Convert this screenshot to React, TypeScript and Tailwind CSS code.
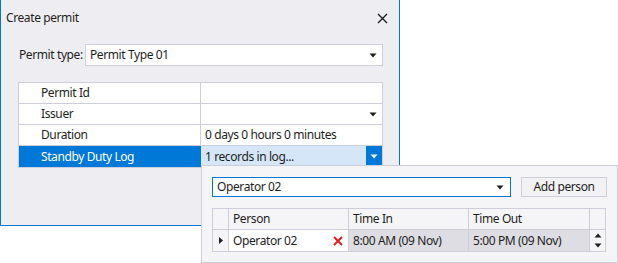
import React from "react";

const Down = ({ color = "#1e1e1e" }: { color?: string }) => (
  <svg width="8" height="5" viewBox="0 0 8 5" className="block">
    <path d="M0.5 0.5 H7.5 L4 4.5 Z" fill={color} />
  </svg>
);

const Up = () => (
  <svg width="8" height="5" viewBox="0 0 8 5" className="block">
    <path d="M0.5 4.5 H7.5 L4 0.5 Z" fill="#1e1e1e" />
  </svg>
);

export default function App() {
  return (
    <div
      className="relative w-[618px] h-[263px] bg-white overflow-hidden text-[12px] leading-[16px] tracking-[-0.4px] text-[#1e1e1e] whitespace-nowrap"
      style={{ fontFamily: '"Noto Sans", "Open Sans", sans-serif' }}
    >
      {/* Window */}
      <div className="w-[400px] h-[226px] bg-[#eeeef2] border-l border-r border-b border-[#0078d7] flex flex-col">
        <div className="h-[36px] flex items-center justify-between pl-[5px] pr-[11px]">
          <span>Create permit</span>
          <svg width="11" height="11" viewBox="0 0 11 11">
            <path d="M1 1 L10 10 M10 1 L1 10" stroke="#1e1e1e" strokeWidth="1.4" />
          </svg>
        </div>
        <div className="mt-[8px] pl-[18px] pr-[16px] flex items-center">
          <span className="w-[66px]">Permit type:</span>
          <div className="flex-1 h-[22px] bg-white border border-[#cccedb] flex items-center justify-between pl-[4px] pr-[5px]">
            <span>Permit Type 01</span>
            <Down />
          </div>
        </div>
        <div className="mt-[16px] ml-[17px] mr-[16px] border border-[#cccedb] bg-white">
          <div className="flex h-[21px] border-b border-[#cccedb]">
            <div className="w-[182px] border-r border-[#cccedb] pl-[22px] flex items-center">Permit Id</div>
            <div className="flex-1" />
          </div>
          <div className="flex h-[21px] border-b border-[#cccedb]">
            <div className="w-[182px] border-r border-[#cccedb] pl-[22px] flex items-center">Issuer</div>
            <div className="flex-1 flex items-center justify-end pr-[5px]">
              <Down />
            </div>
          </div>
          <div className="flex h-[21px] border-b border-[#cccedb]">
            <div className="w-[182px] border-r border-[#cccedb] pl-[22px] flex items-center">Duration</div>
            <div className="flex-1 flex items-center pl-[4px]">0 days 0 hours 0 minutes</div>
          </div>
          <div className="flex h-[21px]">
            <div className="w-[182px] bg-[#0078d7] text-white pl-[22px] flex items-center">Standby Duty Log</div>
            <div className="flex-1 bg-[#d4e6f7] flex items-center justify-between pl-[4px]">
              <span>1 records in log...</span>
              <div className="w-[16px] h-full bg-[#0078d7] flex items-center justify-center">
                <Down color="#ffffff" />
              </div>
            </div>
          </div>
        </div>
      </div>

      {/* Popup */}
      <div className="absolute left-[201px] top-[165px] w-[417px] h-[98px] bg-[#f5f5f7] border border-[#cccedb] pl-[10px] pr-[10px] pt-[11px]">
        <div className="flex gap-[10px]">
          <div className="w-[299px] h-[20px] bg-white border border-[#0078d7] flex items-center justify-between pl-[4px] pr-[6px]">
            <span>Operator 02</span>
            <Down />
          </div>
          <div className="w-[86px] h-[20px] bg-[#f2f2f5] border border-[#cccedb] flex items-center justify-center">
            Add person
          </div>
        </div>
        <div className="mt-[11px] w-[394px] border border-[#cccedb] bg-[#f5f5f7]">
          <div className="grid grid-cols-[16px_120px_120px_121px_1fr] h-[21px] border-b border-[#cccedb]">
            <div className="border-r border-[#cccedb]" />
            <div className="border-r border-[#cccedb] pl-[4px] flex items-center">Person</div>
            <div className="border-r border-[#cccedb] pl-[4px] flex items-center">Time In</div>
            <div className="border-r border-[#cccedb] pl-[4px] flex items-center">Time Out</div>
            <div />
          </div>
          <div className="grid grid-cols-[16px_120px_120px_121px_1fr] h-[21px]">
            <div className="border-r border-[#cccedb] flex items-center justify-center">
              <svg width="4" height="7" viewBox="0 0 4 7">
                <path d="M0 0 L4 3.5 L0 7 Z" fill="#1e1e1e" />
              </svg>
            </div>
            <div className="border-r border-[#cccedb] bg-white pl-[4px] pr-[5px] flex items-center justify-between">
              <span>Operator 02</span>
              <svg width="10" height="10" viewBox="0 0 10 10">
                <path d="M1 1 L9 9 M9 1 L1 9" stroke="#e0201e" strokeWidth="2" />
              </svg>
            </div>
            <div className="border-r border-[#cccedb] bg-[#dddde3] pl-[4px] flex items-center">8:00 AM (09 Nov)</div>
            <div className="border-r border-[#cccedb] bg-[#dddde3] pl-[4px] flex items-center">5:00 PM (09 Nov)</div>
            <div className="flex flex-col items-center justify-between py-[3px]">
              <Up />
              <Down />
            </div>
          </div>
        </div>
      </div>
    </div>
  );
}
